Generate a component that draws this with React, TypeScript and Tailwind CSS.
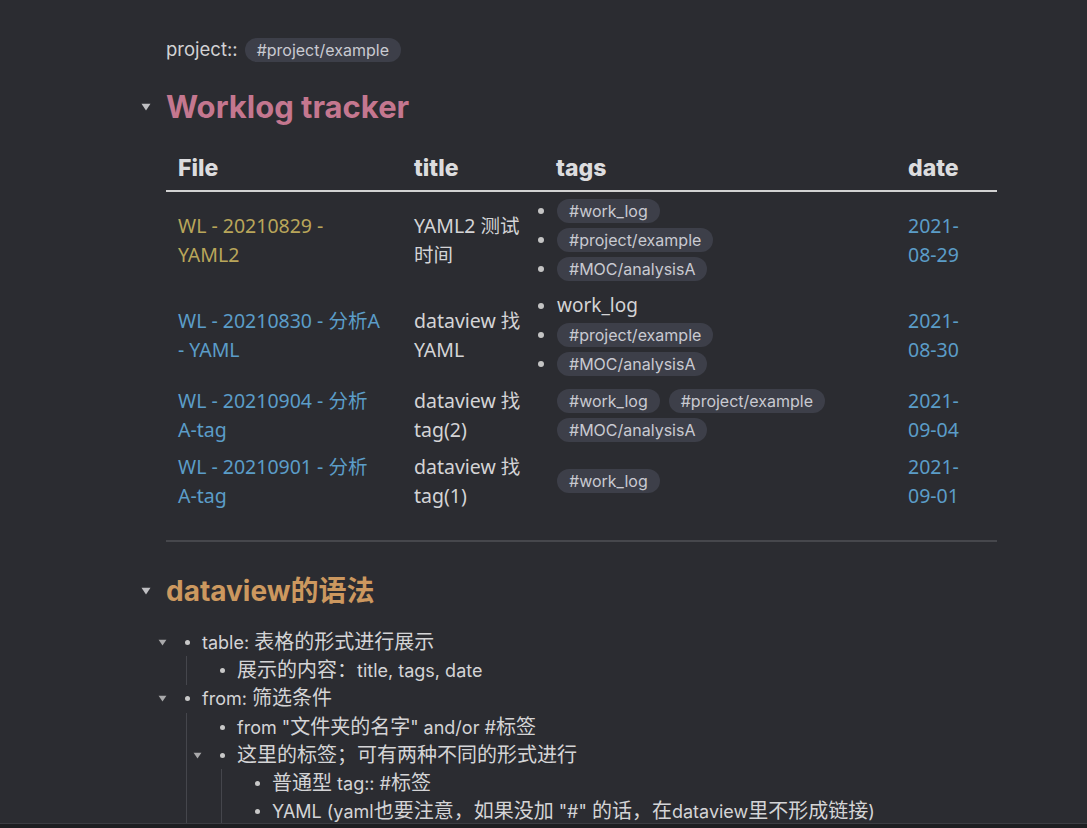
import React from 'react';

const Caret = ({ className = '' }: { className?: string }) => (
    <svg viewBox="0 0 10 8" className={className} fill="currentColor">
        <path d="M0.5 0.8h9L5 7.4z" />
    </svg>
);

const Tag = ({ children }: { children: React.ReactNode }) => (
    <span className="inline-flex items-center h-[24px] px-[12px] rounded-full bg-[#3d3f49] text-[#c9cad1] text-[16px] font-['Inter','Noto_Sans_CJK_SC',sans-serif] leading-none whitespace-nowrap">
        {children}
    </span>
);

const Dot = () => <span className="w-[6px] h-[6px] rounded-full bg-[#c4c4c4] mr-[13px] shrink-0" />;

// CJK glyphs render a bit larger than the latin ones in the outline
const Mixed = ({ text }: { text: string }) => (
    <>
        {text.split(/([\u3000-\u9fff\uff00-\uffef]+)/).map((part, i) =>
            /[\u3000-\u9fff\uff00-\uffef]/.test(part) ? (
                <span key={i} className="text-[20px] leading-[20px]">{part}</span>
            ) : (
                <span key={i}>{part}</span>
            )
        )}
    </>
);

type TagItem = { text: string; pill: boolean };

interface Row {
    file: string[];
    fileColor: string;
    title: string[];
    tags: TagItem[];
    bulleted: boolean;
    date: string[];
}

const rows: Row[] = [
    {
        file: ['WL - 20210829 -', 'YAML2'],
        fileColor: 'text-[#b9a65a]',
        title: ['YAML2 测试', '时间'],
        tags: [
            { text: '#work_log', pill: true },
            { text: '#project/example', pill: true },
            { text: '#MOC/analysisA', pill: true },
        ],
        bulleted: true,
        date: ['2021-', '08-29'],
    },
    {
        file: ['WL - 20210830 - 分析A', '- YAML'],
        fileColor: 'text-[#5b9dc8]',
        title: ['dataview 找', 'YAML'],
        tags: [
            { text: 'work_log', pill: false },
            { text: '#project/example', pill: true },
            { text: '#MOC/analysisA', pill: true },
        ],
        bulleted: true,
        date: ['2021-', '08-30'],
    },
    {
        file: ['WL - 20210904 - 分析', 'A-tag'],
        fileColor: 'text-[#5b9dc8]',
        title: ['dataview 找', 'tag(2)'],
        tags: [
            { text: '#work_log', pill: true },
            { text: '#project/example', pill: true },
            { text: '#MOC/analysisA', pill: true },
        ],
        bulleted: false,
        date: ['2021-', '09-04'],
    },
    {
        file: ['WL - 20210901 - 分析', 'A-tag'],
        fileColor: 'text-[#5b9dc8]',
        title: ['dataview 找', 'tag(1)'],
        tags: [{ text: '#work_log', pill: true }],
        bulleted: false,
        date: ['2021-', '09-01'],
    },
];

const cell = "px-[12px] py-[4px] leading-[29px] text-[19.5px] font-['Noto_Sans','Noto_Sans_CJK_SC',sans-serif]";

const Lines = ({ lines }: { lines: string[] }) => (
    <>
        {lines.map((l) => (
            <div key={l} className="whitespace-nowrap">{l}</div>
        ))}
    </>
);

interface ListNode {
    text: string;
    children?: ListNode[];
}

const outline: ListNode[] = [
    { text: 'table: 表格的形式进行展示', children: [{ text: '展示的内容：title, tags, date' }] },
    {
        text: 'from: 筛选条件',
        children: [
            { text: 'from "文件夹的名字" and/or #标签' },
            {
                text: '这里的标签；可有两种不同的形式进行',
                children: [
                    { text: '普通型 tag:: #标签' },
                    { text: 'YAML (yaml也要注意，如果没加 "#" 的话，在dataview里不形成链接)' },
                ],
            },
        ],
    },
];

const OutlineItem = ({ node }: { node: ListNode }) => (
    <li>
        <div className="flex items-center h-[28.3px]">
            <span className="w-[20px] flex justify-center text-[#a9a9ab]">
                {node.children && <Caret className="w-[9px] h-[7px]" />}
            </span>
            <span className="w-[30px] flex justify-center">
                <span className="w-[5px] h-[5px] rounded-full bg-[#c8c8c8]" />
            </span>
            <span className="whitespace-nowrap leading-[20px]">
                <Mixed text={node.text} />
            </span>
        </div>
        {node.children && (
            <ul className="ml-[34px] border-l border-[#45464c]">
                {node.children.map((c) => (
                    <OutlineItem key={c.text} node={c} />
                ))}
            </ul>
        )}
    </li>
);

export default function App() {
    return (
        <div className="h-[828px] w-[1087px] bg-[#2b2c31] flex flex-col overflow-hidden font-['Inter','Noto_Sans_CJK_SC',sans-serif]">
            <div className="flex-1 overflow-hidden pl-[166px] pt-[37px]">
                <div className="w-[831px]">
                    {/* front matter line */}
                    <div className="flex items-center h-[26px] text-[18.5px] text-[#d2d2d4] gap-[7px]">
                        <span>project::</span>
                        <Tag>#project/example</Tag>
                    </div>

                    <div className="flex items-center mt-[24px] h-[40px] -ml-[26px]">
                        <span className="w-[26px] flex justify-start pl-[1px] text-[#bfbfc2]">
                            <Caret className="w-[10px] h-[8px]" />
                        </span>
                        <h1 className="text-[31px] font-bold text-[#c4778f] leading-[40px]">Worklog tracker</h1>
                    </div>

                    {/* dataview table */}
                    <div className="mt-[19px]">
                        <div className="grid grid-cols-[236px_134px_360px_101px] h-[46px] items-center border-b-[2px] border-[#d2d2d2] text-[23px] font-extrabold text-[#dcdcde]">
                            <div className="px-[12px]">File</div>
                            <div className="px-[12px]">title</div>
                            <div className="pl-[20px]">tags</div>
                            <div className="px-[12px]">date</div>
                        </div>
                        {rows.map((r) => (
                            <div key={r.file[0]} className="grid grid-cols-[236px_134px_360px_101px] items-center">
                                <div className={`${cell} ${r.fileColor}`}>
                                    <Lines lines={r.file} />
                                </div>
                                <div className={`${cell} text-[#d4d4d6]`}>
                                    <Lines lines={r.title} />
                                </div>
                                <div className="pl-[2px] pr-[12px] py-[4px] leading-[29px]">
                                    {r.bulleted ? (
                                        <ul>
                                            {r.tags.map((t) => (
                                                <li key={t.text} className="flex items-center h-[29px]">
                                                    <Dot />
                                                    {t.pill ? (
                                                        <Tag>{t.text}</Tag>
                                                    ) : (
                                                        <span className="text-[19px] text-[#d4d4d6] font-['Noto_Sans',sans-serif]">{t.text}</span>
                                                    )}
                                                </li>
                                            ))}
                                        </ul>
                                    ) : (
                                        <div className="pl-[19px] flex flex-wrap gap-x-[9px] gap-y-[5px] py-[2.5px]">
                                            {r.tags.map((t) => (
                                                <Tag key={t.text}>{t.text}</Tag>
                                            ))}
                                        </div>
                                    )}
                                </div>
                                <div className={`${cell} text-[#5b9dc8]`}>
                                    <Lines lines={r.date} />
                                </div>
                            </div>
                        ))}
                    </div>

                    <div className="mt-[26px] h-[2px] bg-[#46474c]" />

                    <div className="flex items-center mt-[29px] h-[40px] -ml-[26px]">
                        <span className="w-[26px] flex justify-start pl-[1px] text-[#bfbfc2]">
                            <Caret className="w-[10px] h-[8px]" />
                        </span>
                        <h2 className="text-[28px] font-bold text-[#cc985f] leading-[40px]">dataview的语法</h2>
                    </div>

                    <ul className="mt-[17px] -ml-[14px] text-[18px] text-[#d4d4d6]">
                        {outline.map((n) => (
                            <OutlineItem key={n.text} node={n} />
                        ))}
                    </ul>
                </div>
            </div>
            <div className="h-[1px] bg-[#3c3d42]" />
            <div className="h-[4px] bg-[#1d1e21]" />
        </div>
    );
}
